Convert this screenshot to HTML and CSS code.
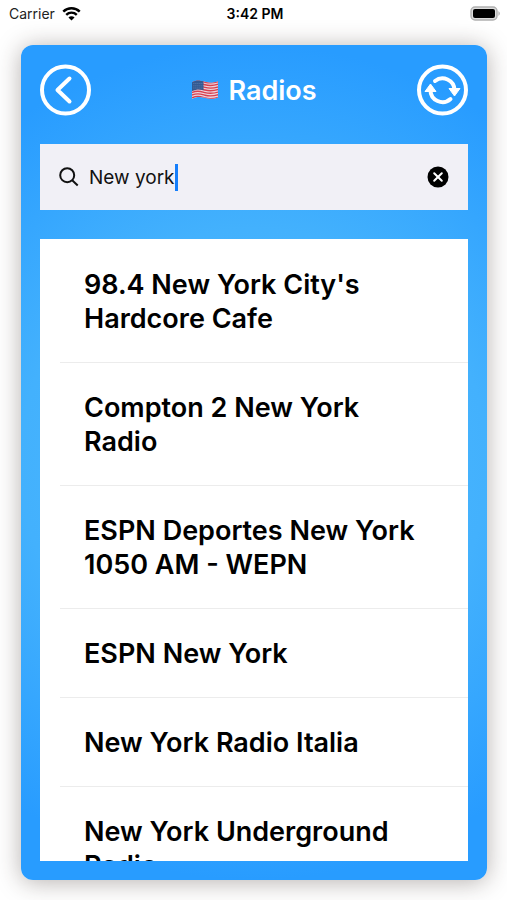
FILE: index.html
```html
<!DOCTYPE html>
<html lang="en">
<head>
<meta charset="utf-8">
<meta name="viewport" content="width=device-width, initial-scale=1">
<title>Radios</title>
<link rel="stylesheet" href="styles.css">
</head>
<body>
<header class="status">
  <span class="carrier">Carrier
    <svg class="wifi" viewBox="0 0 18 14" aria-hidden="true">
      <path d="M1.2 5.2a11.2 11.2 0 0 1 15.6 0M4 8.2a7.2 7.2 0 0 1 10 0" fill="none" stroke="#000" stroke-width="2.3"/>
      <path d="M9 13.6 6.1 10.7a4.1 4.1 0 0 1 5.8 0z"/>
    </svg>
  </span>
  <span class="clock">3:42 PM</span>
  <svg class="battery" viewBox="0 0 31 16" aria-label="Battery full">
    <rect x="1" y="1" width="26" height="13" rx="4" fill="#ddd" stroke="#b0b0b0" stroke-width="1.4"/>
    <rect x="3" y="3" width="22" height="9" rx="2"/>
    <path d="M28.5 5q2.5 2.500 0 5z" fill="#a5a5a5"/>
  </svg>
</header>
<main class="card">
  <div class="bar">
    <button class="round" aria-label="Back">
      <svg viewBox="0 0 52 52"><circle cx="25.500" cy="26" r="23.500"/><path d="M29.500 14.500 17.500 26l12 11.500" stroke-linecap="round" stroke-linejoin="round"/></svg>
    </button>
    <h1 class="title">
      <svg class="flag" viewBox="0 0 28 22" role="img" aria-label="United States flag">
        <defs><clipPath id="wave"><path d="M1 3.200C6 .5 9 1.500 14 2.800S22 4 27 2.200V18.500c-5 2-8 1.300-13 .2S6 17.500 1 20z"/></clipPath></defs>
        <g clip-path="url(#wave)">
          <rect width="28" height="22" fill="#ecd3dc"/>
          <g fill="none" stroke="#d8414f" stroke-width="1.400">
            <path d="M0 3.500C6 .8 9 1.900 14 3.200s8 1.200 14-.8"/>
            <path d="M0 6.100C6 3.400 9 4.500 14 5.800s8 1.200 14-.8"/>
            <path d="M0 8.700C6 6 9 7.100 14 8.400s8 1.200 14-.8"/>
            <path d="M0 11.300C6 8.600 9 9.700 14 11s8 1.200 14-.8"/>
            <path d="M0 13.900c6-2.700 9-1.600 14-.3s8 1.200 14-.8"/>
            <path d="M0 16.500c6-2.700 9-1.600 14-.3s8 1.200 14-.8"/>
            <path d="M0 19.200c6-2.700 9-1.600 14-.3s8 1.200 14-.8"/>
          </g>
          <path d="M0 0h12.500v11.200C8 10 5 10.200 0 12.500z" fill="#345a92"/>
          <path d="M2.500 4.500h9M2.500 6.800h9M2.500 9h9" stroke="#6f92c0" stroke-width=".8" stroke-dasharray=".8 1.200"/>
        </g>
      </svg>
      Radios
    </h1>
    <button class="round" aria-label="Refresh">
      <svg viewBox="0 0 52 52"><circle cx="26.500" cy="26" r="23.500"/>
        <path d="M19 17A12 12 0 0 1 38.500 26M34.500 35A12 12 0 0 1 14.500 26" stroke-linecap="round"/>
        <path class="solid" d="M33 24.500H44L38.500 32zM9 27.500H20L14.500 20z" stroke-linejoin="round"/>
      </svg>
    </button>
  </div>
  <div class="search" role="search">
    <svg class="lens" viewBox="0 0 20 20" aria-hidden="true"><circle cx="8.200" cy="8.200" r="7"/><path d="m13.200 13.200 5.500 5.300"/></svg>
    <input class="query" type="text" value="New york" aria-label="Search radios">
    <span class="caret"></span>
    <button class="clear" aria-label="Clear search"><svg viewBox="0 0 22 22"><circle cx="11" cy="11" r="10.500"/><path d="m7.200 7.200 7.600 7.600m0-7.600-7.600 7.600"/></svg></button>
  </div>
  <ul class="list">
    <li>98.4 New York City's Hardcore Cafe</li>
    <li>Compton 2 New York Radio</li>
    <li>ESPN Deportes New York 1050 AM - WEPN</li>
    <li>ESPN New York</li>
    <li>New York Radio Italia</li>
    <li>New York Underground Radio</li>
  </ul>
</main>
</body>
</html>
```
FILE: styles.css
```css
* { box-sizing: border-box; }
body {
  margin: 0;
  height: 100vh;
  display: flex;
  flex-direction: column;
  overflow: hidden;
  background: #fff;
  color: #000;
  font-family: Inter, "Liberation Sans", sans-serif;
}
button { padding: 0; border: 0; background: none; }
svg { display: block; }
.status {
  display: grid;
  grid-template-columns: 1fr auto 1fr;
  align-items: center;
  height: 27px;
  padding: 0 6px 0 9px;
  font-size: 14px;
}
.carrier { display: flex; align-items: center; gap: 7px; color: #222; }
.wifi { width: 19px; height: 15px; }
.clock { font-weight: 600; }
.battery { width: 31px; height: 16px; justify-self: end; }
.card {
  flex: 1;
  min-height: 0;
  display: flex;
  flex-direction: column;
  margin: 18px 20px 20px 21px;
  padding: 19px;
  border-radius: 12px;
  background: radial-gradient(circle farthest-side, #50bcff 0%, #43b1fd 56%, #289cff 100%);
  box-shadow: 0 2px 24px rgba(50, 35, 30, 0.36);
}
.bar { display: flex; align-items: center; justify-content: space-between; }
.round svg { width: 52px; height: 52px; fill: none; stroke: #fff; stroke-width: 4; }
.round .solid { fill: #fff; stroke-width: 1; }
.title {
  display: flex;
  align-items: center;
  gap: 9px;
  margin: 0;
  color: #fff;
  font-size: 27px;
  font-weight: 600;
}
.flag { width: 28px; height: 22px; }
.search {
  display: flex;
  align-items: center;
  height: 66px;
  margin: 28px 0 29px;
  padding: 0 19px;
  background: #f1f0f6;
}
.lens { width: 20px; height: 20px; margin-right: 10px; fill: none; stroke: #111; stroke-width: 2; }
.query {
  field-sizing: content;
  padding: 0;
  border: 0;
  outline: 0;
  background: none;
  color: #111;
  font: 19px Inter, "Liberation Sans", sans-serif;
}
.caret { width: 3px; height: 27px; background: #157efb; }
.clear { margin-left: auto; }
.clear svg { width: 22px; height: 22px; }
.clear path { stroke: #fff; stroke-width: 2; stroke-linecap: round; }
.list {
  flex: 1;
  min-height: 0;
  overflow: hidden;
  margin: 0;
  padding: 1px 0 0 20px;
  background: #fff;
  list-style: none;
}
.list li {
  padding: 28px 44px 26px 24px;
  border-bottom: 1px solid #ececec;
  font-size: 27px;
  font-weight: 600;
  line-height: 34px;
}
```
